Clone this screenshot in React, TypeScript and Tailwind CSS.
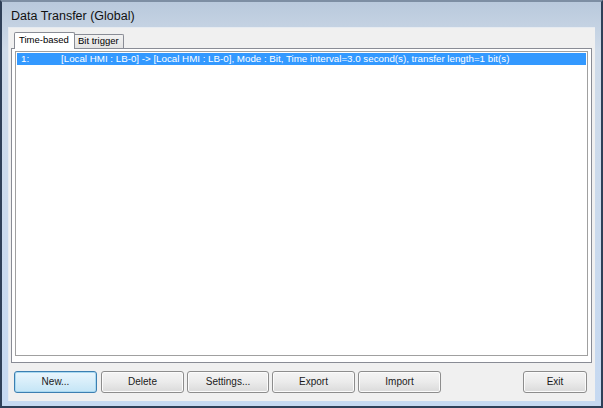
import type { ReactNode } from 'react'

const ui = '"Liberation Sans", Arial, sans-serif'

function Button({ children, focused = false, className = '' }: { children: ReactNode; focused?: boolean; className?: string }) {
  return (
    <button
      className={
        'h-[22px] rounded-[3px] border text-[10px] text-[#1a1a1a] leading-none ' +
        (focused
          ? 'border-[#3c7fb1] bg-gradient-to-b from-[#eaf6fd] to-[#c4e5f6] shadow-[inset_0_0_0_1px_#a9d9f1] '
          : 'border-[#8d8d8d] bg-gradient-to-b from-[#f4f4f4] via-[#ebebeb] to-[#dadada] shadow-[inset_0_0_0_1px_#fbfbfb] ') +
        className
      }
    >
      {children}
    </button>
  )
}

export default function App() {
  return (
    <div
      className="w-[603px] h-[408px] border-2 border-t-[#7d8ea3] border-[#2f4058] bg-gradient-to-b from-[#b9c9dc] via-[#cfdbe9] via-[12%] to-[#c6d9f1] flex flex-col"
      style={{ fontFamily: ui }}
    >
      {/* title bar */}
      <div className="h-[25px] shrink-0 flex items-center pl-[9px] pt-[3px] text-[12.5px] text-[#111]">
        Data Transfer (Global)
      </div>

      {/* client area */}
      <div className="flex-1 mx-[6px] mb-[5px] bg-[#f0f0f0] border-t border-l border-[#e6ebf1] flex flex-col pl-[2px] pr-[3px]">
        {/* tab strip */}
        <div className="h-[16px] mt-[4px] flex items-end pl-[3px] text-[9.5px] text-black">
          <div className="h-[17px] w-[61px] relative z-10 -mb-px bg-white border border-b-0 border-[#898c95] rounded-t-[2px] flex items-center pl-[4px] pb-[1px]">
            Time-based
          </div>
          <div className="h-[14px] w-[49px] bg-gradient-to-b from-[#f2f2f2] to-[#e3e3e3] border border-l-0 border-b-0 border-[#898c95] rounded-tr-[2px] flex items-center pl-[3px]">
            Bit trigger
          </div>
        </div>

        {/* tab page */}
        <div className="h-[315px] bg-white border border-[#898c95] pt-[2px] pl-[3px] pr-[3px] pb-[6px] flex">
          <div className="flex-1 border border-[#a0a0a0] bg-white p-px">
            <div className="h-[12px] bg-[#3399ff] text-white text-[9.75px] leading-[12px] flex whitespace-nowrap">
              <span className="w-[44px] pl-[4px]">1:</span>
              <span>[Local HMI : LB-0] -&gt; [Local HMI : LB-0], Mode : Bit, Time interval=3.0 second(s), transfer length=1 bit(s)</span>
            </div>
          </div>
        </div>

        {/* command buttons */}
        <div className="flex items-center mt-[8px] pl-[3px]">
          <Button focused className="w-[83px]">New...</Button>
          <Button className="w-[83px] ml-[4px]">Delete</Button>
          <Button className="w-[82px] ml-[3px]">Settings...</Button>
          <Button className="w-[83px] ml-[3px]">Export</Button>
          <Button className="w-[83px] ml-[3px]">Import</Button>
          <Button className="w-[64px] ml-auto mr-[5px]">Exit</Button>
        </div>
      </div>
    </div>
  )
}
